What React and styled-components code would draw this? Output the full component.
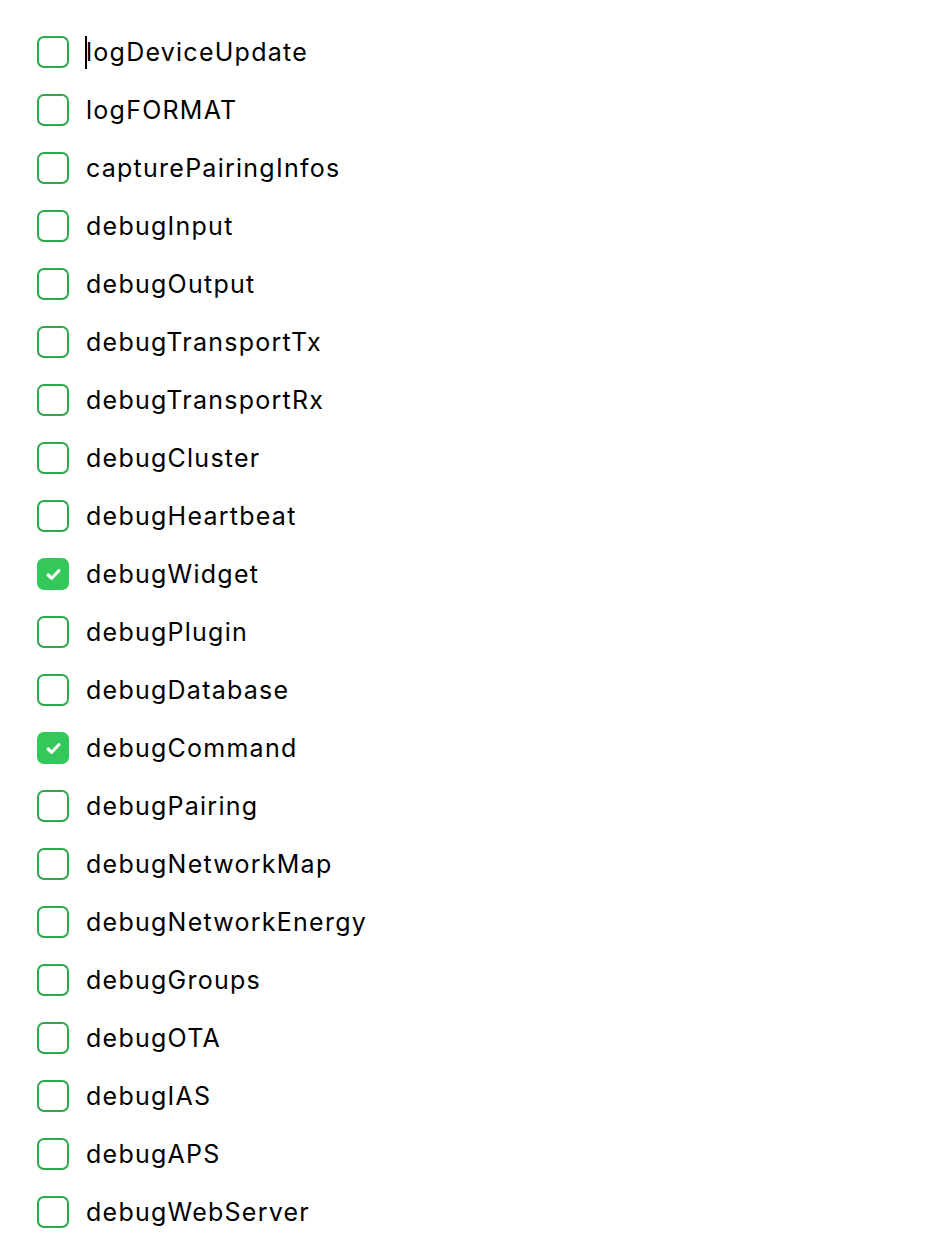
import React from "react";
import styled, { createGlobalStyle } from "styled-components";

const Global = createGlobalStyle`
  html, body { margin: 0; padding: 0; background: #ffffff; }
  body { font-family: Inter, "Helvetica Neue", Arial, sans-serif; color: #000; }
`;

const List = styled.ul`
  list-style: none;
  margin: 0;
  padding: 23px 0 0 37px;
  display: flex;
  flex-direction: column;
`;

const Row = styled.li`
  height: 58px;
  display: flex;
  align-items: center;
  gap: 17px;
`;

const Box = styled.span`
  box-sizing: border-box;
  width: 32px;
  height: 32px;
  border-radius: 7px;
  border: 2px solid ${(p) => (p.$checked ? "#34c759" : "#2ea84a")};
  background: ${(p) => (p.$checked ? "#34c759" : "#fff")};
  display: flex;
  align-items: center;
  justify-content: center;
  flex: none;
`;

const Label = styled.span`
  position: relative;
  font-size: 25px;
  line-height: 32px;
  letter-spacing: 1.25px;
`;

const Caret = styled.span`
  position: absolute;
  left: -1px;
  top: 0;
  width: 2px;
  height: 33px;
  background: #000;
`;

const items = [
  "logDeviceUpdate",
  "logFORMAT",
  "capturePairingInfos",
  "debugInput",
  "debugOutput",
  "debugTransportTx",
  "debugTransportRx",
  "debugCluster",
  "debugHeartbeat",
  "debugWidget",
  "debugPlugin",
  "debugDatabase",
  "debugCommand",
  "debugPairing",
  "debugNetworkMap",
  "debugNetworkEnergy",
  "debugGroups",
  "debugOTA",
  "debugIAS",
  "debugAPS",
  "debugWebServer",
];

const checked = new Set(["debugWidget", "debugCommand"]);

export default function App() {
  return (
    <>
      <Global />
      <List>
        {items.map((name, i) => (
          <Row key={name}>
            <Box $checked={checked.has(name)}>
              {checked.has(name) && (
                <svg width="15" height="13" viewBox="0 0 14 12">
                  <path
                    d="M2 6.5 L5.3 9.5 L12 2.5"
                    fill="none"
                    stroke="#fff"
                    strokeWidth="3"
                    strokeLinecap="round"
                    strokeLinejoin="round"
                  />
                </svg>
              )}
            </Box>
            <Label>
              {i === 0 && <Caret />}
              {name}
            </Label>
          </Row>
        ))}
      </List>
    </>
  );
}
